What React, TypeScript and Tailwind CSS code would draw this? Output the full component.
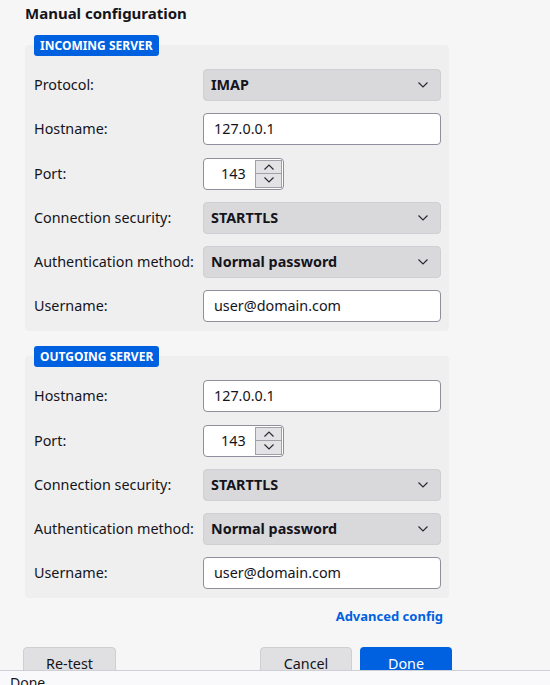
const font = { fontFamily: '"Noto Sans", sans-serif' };

function Chevron({ up = false, className = '' }: { up?: boolean; className?: string }) {
  return (
    <svg width="10" height="6" viewBox="0 0 10 6" className={className} aria-hidden="true">
      <path
        d={up ? 'M0.5 5.5 L5 1 L9.5 5.5' : 'M0.5 0.5 L5 5 L9.5 0.5'}
        fill="none"
        stroke="#2b2a33"
        strokeWidth="1.2"
      />
    </svg>
  );
}

function Select({ value }: { value: string }) {
  return (
    <div className="flex h-8 w-[238px] items-center justify-between rounded-[4px] border border-[#cfcfd3] bg-[#d9d9dc] pl-[7px] pr-[12px] text-[14.35px] font-bold text-[#15141a]">
      <span>{value}</span>
      <Chevron />
    </div>
  );
}

function TextInput({ value }: { value: string }) {
  return (
    <div className="flex h-8 w-[238px] items-center rounded-[4px] border border-[#8f8f9d] bg-white pl-[10px] text-[14.35px] text-[#15141a]">
      {value}
    </div>
  );
}

function PortInput({ value }: { value: string }) {
  return (
    <div className="flex h-[32px] w-[81px] items-center rounded-[4px] border border-[#8f8f9d] bg-white pl-[17px] pr-[1px]">
      <span className="flex-1 text-[14.35px] text-[#15141a]">{value}</span>
      <div className="flex h-[28px] w-[27px] flex-col border border-[#a0a0a8] bg-[#e3e3e6]">
        <div className="flex flex-1 items-center justify-center border-b border-[#a0a0a8]">
          <Chevron up />
        </div>
        <div className="flex flex-1 items-center justify-center">
          <Chevron />
        </div>
      </div>
    </div>
  );
}

type Row = { label: string; kind: 'select' | 'text' | 'port'; value: string };

function Row({ label, kind, value }: Row) {
  return (
    <div className={`flex items-center ${kind === 'port' ? 'h-[33px]' : 'h-8'}`}>
      <div className="w-[169px] text-[14.35px] text-[#15141a]">{label}</div>
      {kind === 'select' && <Select value={value} />}
      {kind === 'text' && <TextInput value={value} />}
      {kind === 'port' && <PortInput value={value} />}
    </div>
  );
}

function ServerSection({ title, rows }: { title: string; rows: Row[] }) {
  return (
    <div className="flex flex-col">
      <div className="relative z-10 ml-[9px] self-start rounded-[3px] bg-[#0061e0] px-[6px] py-[2px] text-[12px] font-bold leading-[17px] text-white">
        {title}
      </div>
      <div className="-mt-[11px] flex w-[424px] flex-col gap-y-3 rounded-[4px] bg-[#efeff0] pb-[9px] pl-[9px] pr-[8px] pt-[24px]">
        {rows.map((r) => (
          <Row key={r.label} {...r} />
        ))}
      </div>
    </div>
  );
}

const incoming: Row[] = [
  { label: 'Protocol:', kind: 'select', value: 'IMAP' },
  { label: 'Hostname:', kind: 'text', value: '127.0.0.1' },
  { label: 'Port:', kind: 'port', value: '143' },
  { label: 'Connection security:', kind: 'select', value: 'STARTTLS' },
  { label: 'Authentication method:', kind: 'select', value: 'Normal password' },
  { label: 'Username:', kind: 'text', value: 'user@domain.com' },
];

const outgoing: Row[] = [
  { label: 'Hostname:', kind: 'text', value: '127.0.0.1' },
  { label: 'Port:', kind: 'port', value: '143' },
  { label: 'Connection security:', kind: 'select', value: 'STARTTLS' },
  { label: 'Authentication method:', kind: 'select', value: 'Normal password' },
  { label: 'Username:', kind: 'text', value: 'user@domain.com' },
];

export default function App() {
  return (
    <div className="relative h-[685px] w-[550px] overflow-hidden bg-[#f6f6f7]" style={font}>
      <div className="flex flex-col pl-[25px]">
        <h2 className="pt-[3px] text-[15px] font-bold leading-[20px] text-[#15141a]">
          Manual configuration
        </h2>
        <div className="mt-[12px]">
          <ServerSection title="INCOMING SERVER" rows={incoming} />
        </div>
        <div className="mt-[15px]">
          <ServerSection title="OUTGOING SERVER" rows={outgoing} />
        </div>
        <div className="mt-[9px] flex w-[418px] justify-end">
          <a className="text-[13px] font-bold leading-[18px] text-[#0061e0]">Advanced config</a>
        </div>
        <div className="mt-[22px] -ml-[2px] flex w-[429px]">
          <button className="h-[34px] w-[93px] rounded-[4px] border border-[#cfcfd3] bg-[#e0e0e3] text-[14.35px] text-[#15141a]">
            Re-test
          </button>
          <div className="flex-1" />
          <button className="h-[34px] w-[92px] rounded-[4px] border border-[#cfcfd3] bg-[#e0e0e3] text-[14.35px] text-[#15141a]">
            Cancel
          </button>
          <button className="ml-[8px] h-[34px] w-[92px] rounded-[4px] bg-[#0061e0] text-[14.35px] text-white">
            Done
          </button>
        </div>
      </div>
      <div className="absolute left-0 right-0 top-[670px] h-[15px] border-t border-[#cfcfd8] bg-[#f9f9fb] pl-[10px] pt-[2px] text-[14px] leading-[20px] text-[#15141a]">
        Done
      </div>
    </div>
  );
}
